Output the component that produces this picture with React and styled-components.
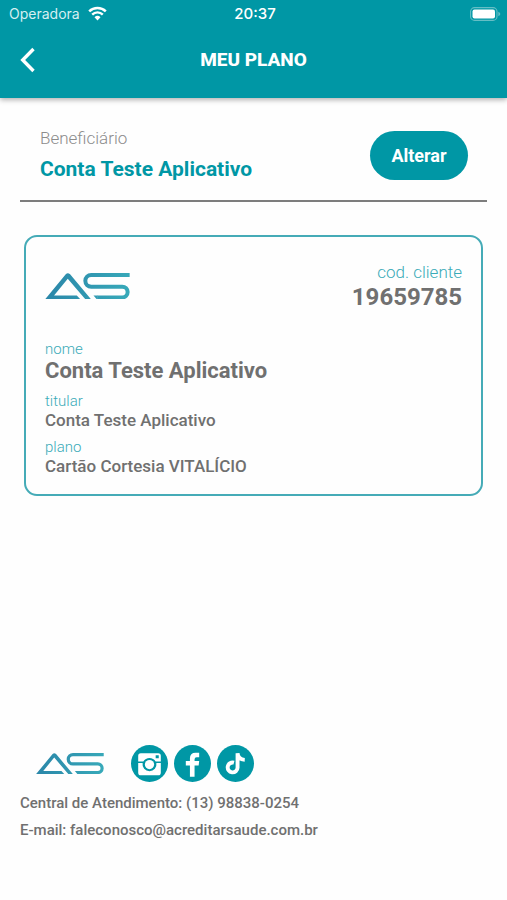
import styled, { createGlobalStyle } from "styled-components";

const beneficiary = {
  name: "Conta Teste Aplicativo",
  holder: "Conta Teste Aplicativo",
  plan: "Cartão Cortesia VITALÍCIO",
  code: "19659785",
};

const Logo = ({ id, width }) => (
  <svg width={width} viewBox="0 0 254 80" role="img" aria-label="AS">
    <defs>
      <linearGradient id={id} gradientUnits="userSpaceOnUse" x1="0" y1="0" x2="254" y2="40">
        <stop offset="0" stopColor="#2a85a8" />
        <stop offset="1" stopColor="#37a9b9" />
      </linearGradient>
    </defs>
    <path
      d="M0 79 62 4Q68 -2 75 4L138 79H121L68 17 27 67H95L106 79Z"
      fill={`url(#${id})`}
    />
    <path
      d="M253 6H138a17 17 0 0 0 0 35H231a16 16 0 0 1 0 32H156"
      fill="none"
      stroke={`url(#${id})`}
      strokeWidth="12"
    />
    <path d="M145 67H157V79H155Z" fill={`url(#${id})`} />
  </svg>
);

const WifiIcon = () => (
  <svg width="19" height="15" viewBox="0 0 19 15" fill="none" stroke="#fff" aria-hidden="true">
    <path d="M1.2 5.3a11.8 11.8 0 0 1 16.6 0" strokeWidth="2.5" />
    <path d="M4.2 8.6a7.5 7.5 0 0 1 10.6 0" strokeWidth="2.4" />
    <path d="M6.5 11.3a4.3 4.3 0 0 1 6 0L9.5 14.4Z" fill="#fff" stroke="none" />
  </svg>
);

const BatteryIcon = () => (
  <svg width="31" height="14" viewBox="0 0 31 14" aria-hidden="true">
    <rect x="0.6" y="0.6" width="26.4" height="12.8" rx="4" fill="none" stroke="#66bec5" strokeWidth="1.1" />
    <rect x="2.5" y="2.5" width="22.5" height="9" rx="2" fill="#fff" />
    <path d="M28.3 4.8q2 .7 2 2.2t-2 2.2Z" fill="#66bec5" />
  </svg>
);

const BackIcon = () => (
  <svg width="16" height="26" viewBox="0 0 16 26" fill="none" aria-hidden="true">
    <path d="M13.5 2 2.7 13l10.8 11" stroke="#fff" strokeWidth="3.4" />
  </svg>
);

const InstagramIcon = () => (
  <svg viewBox="0 0 36 36" aria-hidden="true">
    <path
      fill="#fff"
      fillRule="evenodd"
      d="M9.5 8H26.5Q29 8 29 10.5V16H24A7 7 0 0 0 12 16H7V10.5Q7 8 9.5 8ZM24 10v3h3v-3Z"
    />
    <path
      fill="#fff"
      d="M7 17.5H11.3A6.8 6.8 0 1 0 24.7 17.5H29V27Q29 29.500 26.5 29.500H9.500Q7 29.500 7 27Z"
    />
    <circle cx="18" cy="19" r="4.5" fill="#fff" />
  </svg>
);

const FacebookIcon = () => (
  <svg viewBox="0 0 36 36" aria-hidden="true">
    <path
      fill="#fff"
      d="M15.5 31V20H11.5V15.5H15.5V13Q15.500 7.500 21 7.500H24.500V12H22Q20 12 20 14V15.500H24.500L24 20H20V31Z"
    />
  </svg>
);

const TiktokIcon = () => (
  <svg viewBox="0 0 36 36" aria-hidden="true">
    <path
      fill="none"
      stroke="#fff"
      strokeWidth="3.8"
      d="M16.5 17.2A4.8 4.8 0 1 0 20 22V8C20.3 12 22.5 14.3 27 14.5"
    />
  </svg>
);

const socials = [
  { label: "Instagram", Icon: InstagramIcon },
  { label: "Facebook", Icon: FacebookIcon },
  { label: "TikTok", Icon: TiktokIcon },
];

const App = () => {
  return (
    <>
      <GlobalStyle />
      <Page>
        <Header>
          <StatusBar>
            <Carrier>
              Operadora
              <WifiIcon />
            </Carrier>
            <Clock>20:37</Clock>
            <Battery>
              <BatteryIcon />
            </Battery>
          </StatusBar>
          <NavBar>
            <BackButton type="button" aria-label="Voltar">
              <BackIcon />
            </BackButton>
            <Title>MEU PLANO</Title>
          </NavBar>
        </Header>

        <Main>
          <Selector>
            <div>
              <SelectorLabel>Beneficiário</SelectorLabel>
              <SelectorName>{beneficiary.name}</SelectorName>
            </div>
            <ChangeButton type="button">Alterar</ChangeButton>
          </Selector>

          <Card>
            <CardTop>
              <Logo id="cardLogo" width={85} />
              <Code>
                <CodeLabel>cod. cliente</CodeLabel>
                <CodeValue>{beneficiary.code}</CodeValue>
              </Code>
            </CardTop>
            <Fields>
              <div>
                <FieldLabel>nome</FieldLabel>
                <FieldValue $large>{beneficiary.name}</FieldValue>
              </div>
              <div>
                <FieldLabel>titular</FieldLabel>
                <FieldValue>{beneficiary.holder}</FieldValue>
              </div>
              <div>
                <FieldLabel>plano</FieldLabel>
                <FieldValue>{beneficiary.plan}</FieldValue>
              </div>
            </Fields>
          </Card>
        </Main>

        <Footer>
          <Brand>
            <Logo id="footerLogo" width={68} />
            <SocialList>
              {socials.map(({ label, Icon }) => (
                <SocialLink key={label} href="#" aria-label={label}>
                  <Icon />
                </SocialLink>
              ))}
            </SocialList>
          </Brand>
          <Contact>Central de Atendimento: (13) 98838-0254</Contact>
          <Contact>E-mail: faleconosco@acreditarsaude.com.br</Contact>
        </Footer>
      </Page>
    </>
  );
};

const GlobalStyle = createGlobalStyle`
  * {
    box-sizing: border-box;
  }

  body {
    margin: 0;
    background-color: #fefefe;
    font-family: Roboto, "Liberation Sans", sans-serif;
  }

  p, h1, dl, dd {
    margin: 0;
  }

  svg {
    display: block;
  }
`;

const Page = styled.div`
  display: flex;
  flex-direction: column;
  min-height: 100vh;
`;

const Header = styled.header`
  background-color: #0097a5;
  box-shadow: 0 2px 5px rgba(0, 0, 0, 0.3);
  color: #fff;
`;

const StatusBar = styled.div`
  display: grid;
  grid-template-columns: 1fr auto 1fr;
  align-items: center;
  height: 27px;
  padding: 0 6px 0 9px;

  font-family: Inter, sans-serif;
  font-size: 14px;
`;

const Carrier = styled.span`
  display: flex;
  align-items: center;
  gap: 8px;
  color: #d5eff1;
`;

const Clock = styled.span`
  font-size: 15px;
  font-weight: 500;
`;

const Battery = styled.span`
  justify-self: end;
`;

const NavBar = styled.div`
  display: grid;
  grid-template-columns: 48px 1fr 48px;
  align-items: center;
  height: 71px;
  padding-bottom: 6px;
`;

const BackButton = styled.button`
  padding: 0 0 0 20px;
  border: 0;
  background: none;
  cursor: pointer;
`;

const Title = styled.h1`
  font-size: 19px;
  font-weight: 800;
  line-height: 24px;
  text-align: center;
`;

const Main = styled.main`
  display: flex;
  flex: 1;
  flex-direction: column;
  gap: 33px;
  padding: 28px 20px;
`;

const Selector = styled.section`
  display: flex;
  align-items: center;
  justify-content: space-between;
  height: 76px;
  padding: 0 19px 16px 20px;
  border-bottom: 2px solid #7d7d7d;
`;

const SelectorLabel = styled.p`
  color: #8c8c8c;
  font-size: 17px;
  font-weight: 300;
  line-height: 28px;
`;

const SelectorName = styled.p`
  color: #0097a5;
  font-size: 21px;
  font-weight: 700;
  line-height: 34px;
`;

const ChangeButton = styled.button`
  width: 98px;
  height: 49px;
  padding: 0;
  border: 0;
  border-radius: 25px;
  background-color: #0097a5;
  color: #fff;
  font-family: inherit;
  font-size: 18px;
  font-weight: 700;
  cursor: pointer;
`;

const Card = styled.section`
  margin: 0 4px;
  padding: 24px 19px 18px;
  border: 2px solid #45abb7;
  border-radius: 13px;
`;

const CardTop = styled.div`
  display: flex;
  align-items: center;
  justify-content: space-between;
`;

const Code = styled.div`
  text-align: right;
`;

const CodeLabel = styled.p`
  color: #3aabb8;
  font-size: 17px;
  font-weight: 300;
  line-height: 22px;
`;

const CodeValue = styled.p`
  color: #707070;
  font-size: 24px;
  font-weight: 700;
  line-height: 28px;
`;

const Fields = styled.dl`
  display: flex;
  flex-direction: column;
  gap: 8px;
  padding-top: 29px;
`;

const FieldLabel = styled.dt`
  color: #3aabb8;
  font-size: 15px;
  font-weight: 300;
  line-height: 18px;
`;

const FieldValue = styled.dd`
  color: #707070;
  font-size: ${(props) => (props.$large ? "22px" : "17px")};
  font-weight: ${(props) => (props.$large ? 700 : 500)};
  line-height: ${(props) => (props.$large ? "26px" : "20px")};
`;

const Footer = styled.footer`
  padding: 0 20px 56px;
`;

const Brand = styled.div`
  display: flex;
  align-items: center;
  gap: 27px;
  padding: 0 16px 8px;
`;

const SocialList = styled.nav`
  display: flex;
  gap: 6px;
`;

const SocialLink = styled.a`
  width: 37px;
  height: 37px;
  border-radius: 50%;
  background-color: #0097a5;
`;

const Contact = styled.p`
  color: #707070;
  font-size: 15px;
  font-weight: 500;
  line-height: 27px;
`;

export default App;
